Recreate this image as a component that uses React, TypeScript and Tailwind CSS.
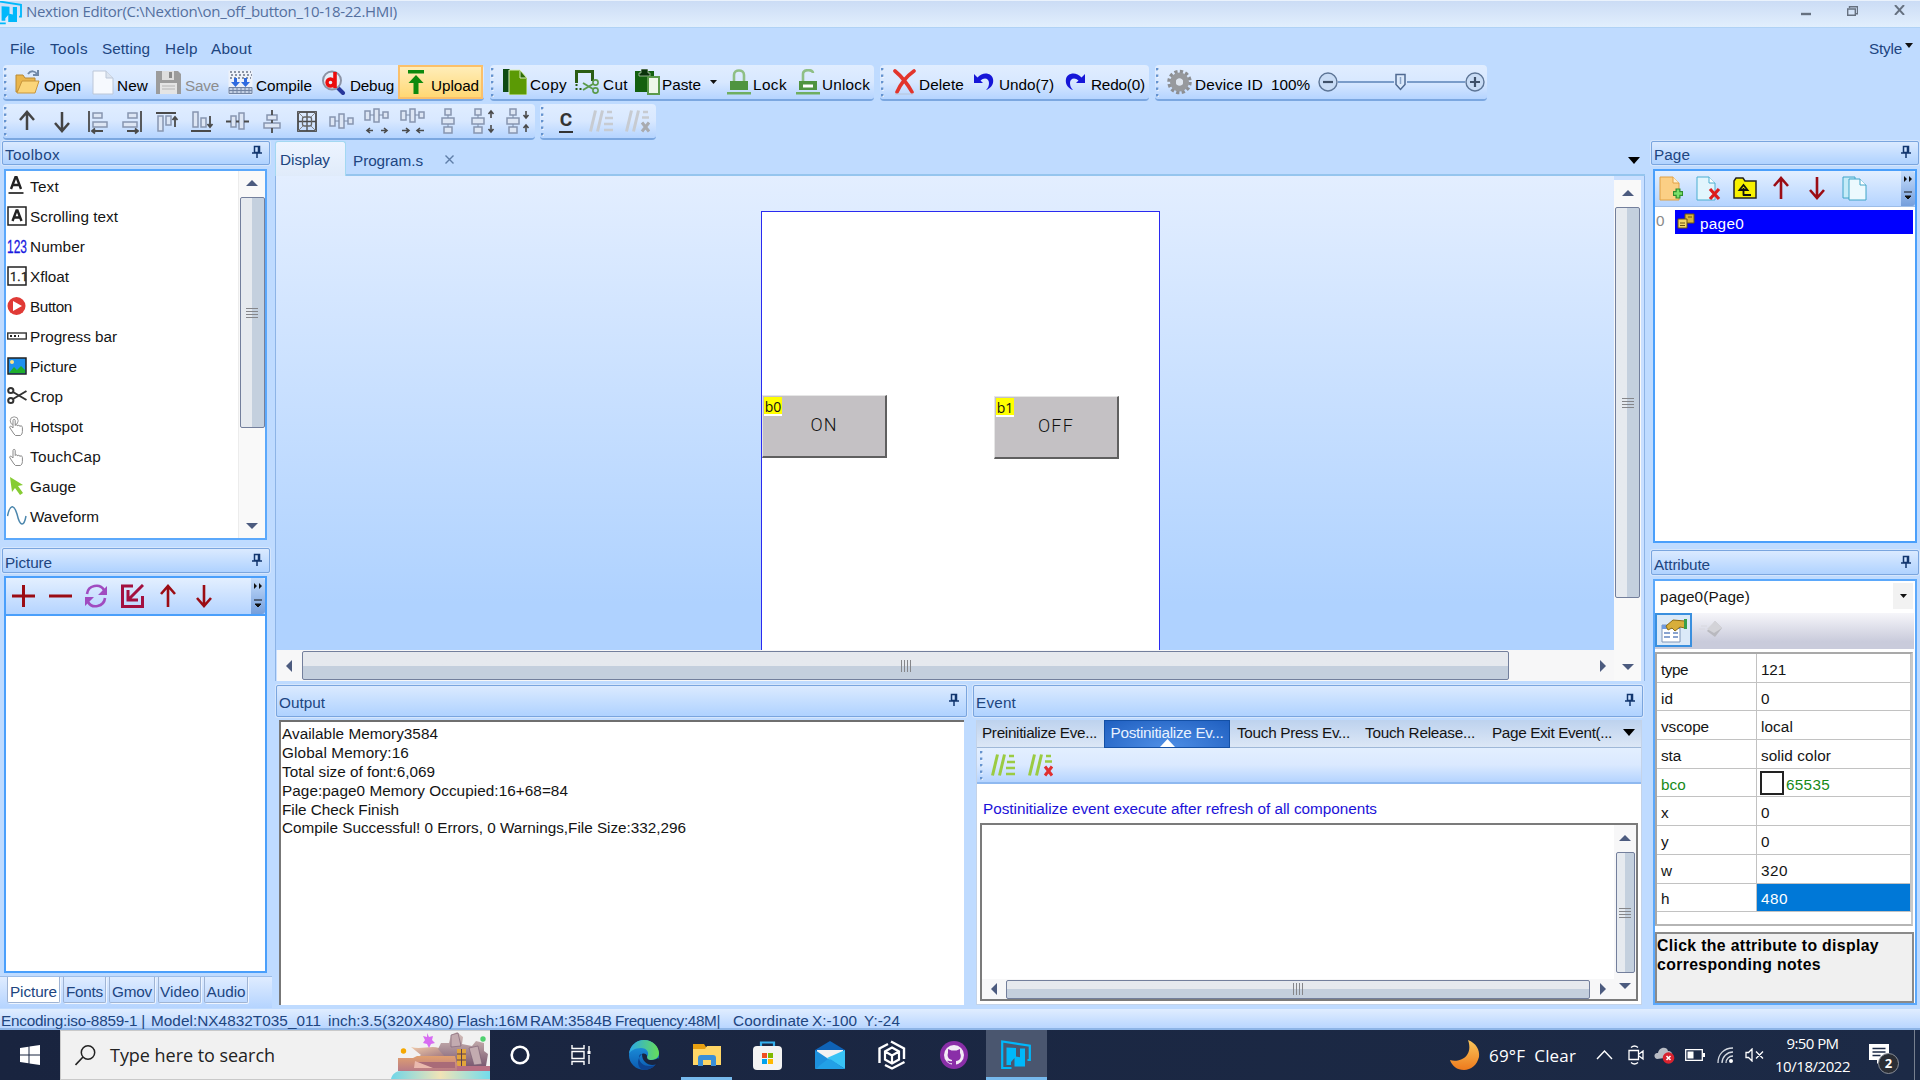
import React, { useLayoutEffect, useRef, useState } from 'react';

type Kids = { children?: React.ReactNode };

/* Text label whose letter spacing is tuned so that it spans a given width. */
function T({ w, c = '', children }: { w?: number; c?: string; children: string }) {
  const ref = useRef<HTMLSpanElement>(null);
  const [ls, setLs] = useState(0);
  useLayoutEffect(() => {
    if (!ref.current || !w) return;
    const natural = ref.current.getBoundingClientRect().width;
    setLs((w - natural) / children.length);
  }, [w, children]);
  return (
    <span ref={ref} className={'inline-block whitespace-pre ' + c} style={{ letterSpacing: ls }}>
      {children}
    </span>
  );
}

function Svg({ w = 24, h = 24, vb, c = '', children }: { w?: number; h?: number; vb?: string; c?: string } & Kids) {
  return (
    <svg width={w} height={h} viewBox={vb || `0 0 ${w} ${h}`} className={'shrink-0 ' + c} fill="none">
      {children}
    </svg>
  );
}

function Grip({ c = '' }: { c?: string }) {
  return (
    <Svg w={4} h={29} c={c}>
      {[0, 6.5, 13, 19.5, 26].map((y) => (
        <g key={y}>
          <rect x="1" y={y + 1} width="2" height="2" fill="#fff" />
          <rect x="0" y={y} width="2.4" height="2.4" fill="#6593cf" />
        </g>
      ))}
    </Svg>
  );
}

function Strip({ c = '', children }: { c?: string } & Kids) {
  return (
    <div className={'flex h-[36px] shrink-0 items-center rounded-[4px] border-b-2 border-[#7ba7e0] bg-linear-to-b from-[#e0edff] via-[#d8e8ff] to-[#b5d4ff] ' + c}>
      {children}
    </div>
  );
}

function Item({ cell, off, icon, label, w, dim, low }: { cell: string; off: string; icon: React.ReactNode; label: string; w: number; dim?: boolean; low?: boolean }) {
  return (
    <div className={'flex h-full shrink-0 items-center ' + cell}>
      <div className={'flex shrink-0 items-center ' + off}>{icon}</div>
      <T w={w} c={'relative ' + (low ? 'top-[4px] ' : 'top-[3px] ') + (dim ? 'text-[#8d8d8d]' : 'text-black')}>{label}</T>
    </div>
  );
}

const Pin = () => (
  <Svg w={10} h={14} c="relative -top-[1px]">
    <path d="M2.500 1.500h5v6h-5zM6.500 1.500v6M0 8h10M5 8v5" stroke="#12366f" strokeWidth="1.500" />
  </Svg>
);

function Head({ title, w, c }: { title: string; w: number; c: string }) {
  return (
    <div className={'flex shrink-0 items-center justify-between rounded-[2px] border border-[#7aa5de] bg-linear-to-b from-[#dbeaff] to-[#afd2ff] pl-[2px] pr-[7px] shadow-[0_0_0_1px_#d6e6fc] ' + c}>
      <T w={w} c="relative top-[2px] text-[#20457f]">{title}</T>
      <Pin />
    </div>
  );
}

const Tri = ({ d, c = '#4c5b7f' }: { d: 'u' | 'd' | 'l' | 'r'; c?: string }) => (
  <Svg w={12} h={12}>
    <path fill={c} d={d === 'u' ? 'M0 9L6 3l6 6z' : d === 'd' ? 'M0 3h12L6 9z' : d === 'l' ? 'M9 0v12L3 6z' : 'M3 0v12l6-6z'} />
  </Svg>
);

function VThumb({ c }: { c: string }) {
  return (
    <div className={'flex shrink-0 flex-col items-center justify-center gap-[2px] rounded-[2px] border border-[#737f9c] bg-linear-to-r from-[#e6eaef] from-50% to-[#c4d0de] to-50% ' + c}>
      {[0, 1, 2, 3].map((i) => <div key={i} className="h-px w-[12px] bg-[#85868a]" />)}
    </div>
  );
}
function HThumb({ c }: { c: string }) {
  return (
    <div className={'flex shrink-0 items-center justify-center gap-[2px] rounded-[2px] border border-[#737f9c] bg-linear-to-b from-[#e6e9ee] from-50% to-[#c4cfdd] to-50% ' + c}>
      {[0, 1, 2, 3].map((i) => <div key={i} className="h-[12px] w-px bg-[#85868a]" />)}
    </div>
  );
}

/* ---------- brand glyph ---------- */
const Nextion = ({ s = 30 }: { s?: number }) => (
  <Svg w={s} h={s} vb="0 0 30 30">
    <path d="M10.500 28H1.200V1.500L28.800 5.700V20H26.500" stroke="#00b8fb" strokeWidth="2.200" />
    <path d="M5.500 7.500l9.500.5v8.500l4 .8V8.500h5V26.500H13.500V18l-3.500 4v3H5.500z" fill="#00b8fb" />
  </Svg>
);

/* ---------- main toolbar icons ---------- */
const OpenI = (
  <Svg w={26} h={26}>
    <path d="M1 6h7l2 3h10v5H7L2 23H1z" fill="#e9b54c" stroke="#b98a35" />
    <path d="M7 12h17l-4 12H2z" fill="#fbd57a" stroke="#c8953c" />
    <path d="M13 5c3-4 7-3 9 0M23 1v5h-5" stroke="#7189a8" strokeWidth="2" />
  </Svg>
);
const NewI = (
  <Svg w={22} h={25}>
    <path d="M1 1h13l7 7v16H1z" fill="#f6f9fe" stroke="#bcc7d8" />
    <path d="M14 1v7h7" fill="#dce4ef" stroke="#bcc7d8" />
  </Svg>
);
const SaveI = (
  <Svg w={25} h={25}>
    <path d="M0 1h22l3 3v20H0z" fill="#9c9c9c" />
    <path d="M6 1h12v9H6z" fill="#dedede" /><path d="M13 2h3v6h-3z" fill="#8b8b8b" />
    <path d="M4 13h17v11H4z" fill="#e4e4e4" /><path d="M6 16h13M6 19h13" stroke="#b4b4b4" />
  </Svg>
);
const CompileI = (
  <Svg w={25} h={25}>
    <rect x="0.500" y="0.500" width="24" height="24" fill="#eef2f9" />
    <path d="M2 2h21M3 5h21M2 8h21" stroke="#6b7689" strokeWidth="1.500" strokeDasharray="2 2" />
    <path d="M6 8h3v4h3l-4.500 5L3 12h3zM16 8h3v4h3l-4.500 5L13 12h3z" fill="#2f6be0" />
    <path d="M1 17.500h23v6H1z" fill="#c3cfe2" stroke="#7384a2" /><path d="M1 20.500h23M5 17v7M9 17v7M13 17v7M17 17v7M21 17v7" stroke="#7384a2" />
  </Svg>
);
const DebugI = (
  <Svg w={25} h={25}>
    <path d="M16 17l6 6" stroke="#27379b" strokeWidth="4" strokeLinecap="round" />
    <circle cx="11" cy="10.500" r="9" fill="#e6edf7" stroke="#8c93a5" strokeWidth="2" />
    <circle cx="9.500" cy="12.500" r="3.500" stroke="#ec0c0c" strokeWidth="3.400" /><path d="M14 2v16" stroke="#ec0c0c" strokeWidth="3.600" />
  </Svg>
);
const UploadI = (
  <Svg w={16} h={24}>
    <path d="M0 0h16v3.500H0zM8 5l7.500 8H10.500v11h-5V13H.5z" fill="#0d8a0d" />
  </Svg>
);
const CopyI = (
  <Svg w={24} h={26}>
    <path d="M0 0h7v23H0z" fill="#0d4a12" /><path d="M6 1h11l7 8v17H6z" fill="#5b9a05" stroke="#d9edc0" /><path d="M17 2v7h6" stroke="#d9edc0" fill="#2d6b0a" />
  </Svg>
);
const CutI = (
  <Svg w={25} h={26}>
    <path d="M1.500 14V2.500h16V12" stroke="#2b5d14" strokeWidth="3" /><path d="M1.500 15v5h7" stroke="#2b5d14" strokeWidth="2" strokeDasharray="2 2" />
    <circle cx="20.500" cy="13.500" r="2.600" stroke="#5b9a4b" strokeWidth="1.600" /><circle cx="20.500" cy="21.500" r="2.600" stroke="#5b9a4b" strokeWidth="1.600" />
    <path d="M18 15l-10 6M18 20L8 14" stroke="#5b9a4b" strokeWidth="2" />
  </Svg>
);
const PasteI = (
  <Svg w={25} h={26}>
    <path d="M0 2h19v21H0z" fill="#14600f" /><path d="M6 0h7v4h2v3H4V4h2z" fill="#0a330b" stroke="#e6f2e0" strokeWidth=".6" />
    <path d="M13 8h11v17H13z" fill="#eef7ea" stroke="#5b9a4b" strokeWidth="2" />
  </Svg>
);
const Lock = ({ open }: { open?: boolean }) => (
  <Svg w={24} h={26}>
    <path d={open ? 'M7 12V5c0-5 10-5 10-1' : 'M7 12V6c0-6 10-6 10 0v6'} stroke="#8fbf85" strokeWidth="2.600" />
    <path d="M3 12h18v9H3z" fill="#4f9440" />{open && <path d="M7 15.500h10v3H7z" fill="#fff" />}
    <path d="M0 23h24v2.500H0z" fill="#6fae60" />
  </Svg>
);
const DelI = (
  <Svg w={23} h={26}>
    <path d="M2 2c6 5 12 12 17 21M21 2C14 7 8 14 4 23" stroke="#e2352c" strokeWidth="3.600" strokeLinecap="round" />
    <path d="M2 25h18" stroke="#b7c4d8" />
  </Svg>
);
const Undo = ({ flip }: { flip?: boolean }) => (
  <Svg w={20} h={20} c={flip ? '-scale-x-100' : ''}>
    <path d="M0 2v9h9L6.500 8.500C10 5 15 6 15 11c0 3-1 5-3 7 5-2 8-6 7-11C18 1 9-1 3.500 5.500z" fill="#1616d8" />
  </Svg>
);
const GearI = (
  <Svg w={25} h={26} vb="0 0 25 26">
    <circle cx="12.500" cy="13" r="10.500" stroke="#8d8f93" strokeWidth="3.500" strokeDasharray="3.200 2.300" />
    <circle cx="12.500" cy="13" r="6.500" stroke="#97999d" strokeWidth="6" /><circle cx="12.500" cy="13" r="3.500" fill="#dfe5ee" />
  </Svg>
);
const Round = ({ plus }: { plus?: boolean }) => (
  <Svg w={20} h={20}>
    <circle cx="10" cy="10" r="9" fill="#c9dcf5" stroke="#5d7596" strokeWidth="1.400" /><path d={plus ? 'M5 10h10M10 5v10' : 'M5 10h10'} stroke="#3f5068" strokeWidth="2.200" />
  </Svg>
);

/* ---------- alignment toolbar icons ---------- */
const B = (x: number, y: number, w: number, h: number) => <rect x={x} y={y} width={w} height={h} fill="#dde6f4" stroke="#8795b0" strokeWidth="1.500" />;
const K = { stroke: '#4a4a4a', strokeWidth: 1.8 };
const hTrio = <>{B(1, 9, 5, 9)}{B(10, 6, 5, 14)}{B(19, 10, 5, 6)}<path d="M6 13h4M15 13h4" stroke="#7d8ca8" /></>;
const hTrioUp = <>{B(1, 3, 5, 9)}{B(10, 1, 5, 13)}{B(19, 4, 5, 6)}<path d="M6 7h4M15 7h4" stroke="#7d8ca8" /></>;
const vTrio = <>{B(5, 1, 6, 6)}{B(2, 10, 12, 6)}{B(4, 19, 8, 6)}<path d="M8 7v3M8 16v3" stroke="#7d8ca8" /></>;
const alignIcons: React.ReactNode[] = [
  <path d="M13 22V4.500M6 12l7-8 7 8" stroke="#444" strokeWidth="2.500" />,
  <path d="M13 4v18M6 15l7 8 7-8" stroke="#444" strokeWidth="2.500" />,
  <>{B(9, 5, 9, 5)}{B(9, 14, 14, 5)}<path d="M5 3v21M8 23h11M11 20.500l-3 2.500 3 2.500" {...K} /></>,
  <>{B(9, 5, 9, 5)}{B(4, 14, 14, 5)}<path d="M22 3v21M8 23h11M16 20.500l3 2.500-3 2.500" {...K} /></>,
  <>{B(4, 8, 5, 15)}{B(12, 8, 5, 9)}<path d="M2 5h20M21 19V9M18.500 12L21 9l2.500 3" {...K} /></>,
  <>{B(4, 4, 5, 15)}{B(12, 10, 5, 9)}<path d="M2 23h20M21 8v11M18.500 16l2.500 3 2.500-3" {...K} /></>,
  <>{B(7, 8, 5, 11)}{B(15, 5, 5, 16)}<path d="M2 13.500h5M12 13.500h3M20 13.500h5" {...K} /></>,
  <>{B(8, 7, 10, 5)}{B(5, 15, 16, 5)}<path d="M13 2v5M13 12v3M13 20v5" {...K} /></>,
  <><rect x="4" y="4" width="18" height="19" {...K} /><path d="M4 13.500h18M13 4v19" {...K} strokeWidth="1.300" /><rect x="8.500" y="9" width="9" height="9" rx="2" stroke="#666" strokeWidth="1.300" /><path d="M4 4l5 5M22 4l-5 5M4 23l5-5M22 23l-5-5" stroke="#888" /></>,
  hTrio,
  <>{hTrioUp}<path d="M3 22.500h6M6 20l-3 2.500L6 25M17 22.500h6M20 20l3 2.500-3 2.500" {...K} strokeWidth="1.600" /></>,
  <>{hTrioUp}<path d="M2 22.500h6M6 20l3 2.500L6 25M18 22.500h6M20 20l-3 2.500 3 2.500" {...K} strokeWidth="1.600" /></>,
  <g transform="translate(5 0)">{vTrio}</g>,
  <>{vTrio}<path d="M21 3v7M18.500 6L21 3l2.500 3M21 17v7M18.500 21l2.500 3 2.500-3" {...K} strokeWidth="1.600" /></>,
  <>{vTrio}<path d="M21 3v7M18.500 7l2.500 3 2.500-3M21 17v7M18.500 20l2.500-3 2.500 3" {...K} strokeWidth="1.600" /></>,
];
const Comment = ({ col, x }: { col: string; x?: string }) => (
  <Svg w={25} h={24}>
    <path d="M1.500 22.500L6.500 1.500M8.500 22.500l5-21" stroke={col} strokeWidth="3" />
    {x ? <><path d="M18 3h5M17 8.500h7" stroke={col} strokeWidth="2.400" /><path d="M17 13.500l7 9M24 13.500l-7 9" stroke={x} strokeWidth="3" /></>
      : <path d="M18 3h5M16 9h8M15 15h9M15 21h9" stroke={col} strokeWidth="2.400" />}
  </Svg>
);

/* ---------- toolbox ---------- */
const hand = <path d="M7 18l-4-6c-1-1.500.5-2.500 2-1l1 1V4.500c0-1.500 2.200-1.500 2.200 0v5c0-1 2.400-1 2.400.5 0-1 2.400-1 2.400.5 0-1 2.400-1 2.400 1v4c0 2-1 3.500-2 4H8.500z" fill="#fff" stroke="#8a8a8a" />;
const toolbox: [string, number, React.ReactNode][] = [
  ['Text', 29, <><path d="M4 13L8.500 1h1L14 13M5.500 9h7" stroke="#222" strokeWidth="2.400" /><path d="M1.500 17h15" stroke="#444" strokeWidth="2" /></>],
  ['Scrolling text', 88, <><rect x="1" y="1" width="18" height="18" fill="#fff" stroke="#222" strokeWidth="1.500" /><path d="M5.500 15L9.500 4.500h1l4 10.500M7 11.500h6" stroke="#222" strokeWidth="2.400" /></>],
  ['Number', 55, <text x="0" y="17" fontSize="19" fill="#1a1adf" transform="scale(.63 1)" fontFamily="Liberation Sans" stroke="#1a1adf" strokeWidth=".3">123</text>],
  ['Xfloat', 39, <><rect x="1" y="1" width="18" height="18" fill="#fff" stroke="#222" strokeWidth="1.500" /><text x="3" y="14.500" fontSize="12.500" fill="#222" letterSpacing=".3" fontFamily="Roboto" stroke="#222" strokeWidth=".3">1.1</text></>],
  ['Button', 42, <><circle cx="9.500" cy="10" r="9" fill="#e03a36" /><path d="M6 5l9 5-9 5z" fill="#fff" /></>],
  ['Progress bar', 87, <><rect x=".75" y="7" width="18.500" height="6" fill="#fff" stroke="#333" strokeWidth="1.400" /><path d="M3 10h9" stroke="#222" strokeWidth="2" strokeDasharray="2 2" /></>],
  ['Picture', 47, <><rect x="1" y="2" width="18" height="16" fill="#1e90f0" stroke="#222" strokeWidth="1.500" /><circle cx="5" cy="6" r="2" fill="#ffe38a" /><path d="M2 17l5-6 3 3 4-4 4 4v3z" fill="#1fae2c" /></>],
  ['Crop', 33, <><circle cx="3.800" cy="4.500" r="2.600" stroke="#333" strokeWidth="2" /><circle cx="3.800" cy="14.500" r="2.600" stroke="#333" strokeWidth="2" /><path d="M6 6l13.500 8M6 13l13.500-8" stroke="#333" strokeWidth="2" /></>],
  ['Hotspot', 53, <><circle cx="7.200" cy="4.800" r="4" stroke="#999" />{hand}</>],
  ['TouchCap', 71, hand],
  ['Gauge', 46, <path d="M3 1l13 8-5 1 5 7-3 2-5-7-3 4z" fill="#86cc33" />],
  ['Waveform', 69, <path d="M.5 10C3-2 7-2 10 8c3 13 7 13 9 2" stroke="#4c87ad" strokeWidth="1.500" />],
];

const Overflow = ({ c = '' }: { c?: string }) => (
  <div className={'flex w-[14px] shrink-0 flex-col items-center justify-between rounded-r-[3px] bg-linear-to-b from-[#c6ddfb] to-[#759fdc] py-[5px] ' + c}>
    <Svg w={10} h={6}><path d="M1 0l3 3-3 3zM6 0l3 3-3 3z" fill="#111" /></Svg>
    <Svg w={8} h={10}><path d="M0 1h8M1 5h6l-3 3z" fill="#111" stroke="#111" strokeWidth="1" /></Svg>
  </div>
);
const RedArrow = ({ down, w = 18 }: { down?: boolean; w?: number }) => (
  <Svg w={w} h={24} vb="0 0 18 24"><path d={down ? 'M9 1v20M2 14l7 8 7-8' : 'M9 23V3M2 10l7-8 7 8'} stroke="#9b0c14" strokeWidth="2.600" /></Svg>
);

function LeftColumn() {
  return (
    <div className="flex w-[272px] shrink-0 flex-col">
      <Head title="Toolbox" w={55} c="mt-px ml-[2px] h-[24px] w-[268px]" />
      <div className="mt-[4px] ml-[4px] flex h-[371px] w-[263px] shrink-0 border-2 border-[#5ba8fb] bg-white">
        <div className="w-[232px]">
          {toolbox.map(([name, w, icon]) => (
            <div key={name} className="flex h-[30px] items-center pl-[2px]">
              <Svg w={20} h={20} c="relative mr-[3px] -ml-px">{icon}</Svg>
              <T w={w} c="relative top-[1px] text-[#141414]">{name}</T>
            </div>
          ))}
        </div>
        <div className="flex flex-1 flex-col items-center justify-between border-l border-[#ececec] bg-[#f9f9f9] pt-[6px] pb-[6px]">
          <Tri d="u" />
          <VThumb c="mt-[8px] mb-auto h-[231px] w-[25px]" />
          <Tri d="d" />
        </div>
      </div>
      <Head title="Picture" w={47} c="mt-[8px] ml-[2px] h-[25px] w-[268px]" />
      <div className="mt-[3px] ml-[4px] flex h-[397px] w-[263px] shrink-0 flex-col border-2 border-[#4a9ffb] bg-white">
        <div className="flex h-[38px] border-b-2 border-[#4a9ffb] bg-linear-to-b from-[#e3efff] to-[#b5d4ff]">
          <div className="flex flex-1 items-center gap-[13.500px] pl-[6px]">
            <Svg w={23}><path d="M0 12h23M11.500 1v22" stroke="#9b0c14" strokeWidth="3" /></Svg>
            <Svg w={23}><path d="M0 12h23" stroke="#9b0c14" strokeWidth="3" /></Svg>
            <Svg w={22}>
              <path d="M2 10C3 1 15-1 19 6M20 14C19 23 7 25 3 18" stroke="#a04bc0" strokeWidth="2.600" />
              <path d="M22 2v9h-9zM0 22v-9h9z" fill="#a04bc0" />
            </Svg>
            <Svg w={23}><path d="M12 2H1.500v20.500H21.500V12M22 1L8 15M7 6v10h10" stroke="#a3103f" strokeWidth="3" /></Svg>
            <RedArrow w={22} />
            <RedArrow w={22} down />
          </div>
          <Overflow />
        </div>
      </div>
      <div className="mt-[3px] flex h-[32px] border-t border-[#9dbde8] bg-linear-to-b from-[#dfecff] to-[#b5d4ff] pl-[7px] text-[#20457f]">
        {([['Picture', 'w-[53px] mr-[3px] bg-white', 47], ['Fonts', 'w-[43px] mr-[3px]', 37], ['Gmov', 'w-[46px] mr-[3px]', 40], ['Video', 'w-[43px] mr-[3px]', 39], ['Audio', 'w-[44px]', 39]] as [string, string, number][]).map(([n, c, w]) => (
          <div key={n} className={'flex h-[26px] items-center justify-center rounded-b-[2px] border border-t-0 border-[#9fb4d4] shadow-[1px_1px_0_#eef5ff] ' + c}>
            <T w={w} c="relative top-[2px]">{n}</T>
          </div>
        ))}
      </div>
    </div>
  );
}

function CanvasButton({ id, label, w, c }: { id: string; label: string; w: number; c: string }) {
  return (
    <div className={'absolute flex h-[63px] w-[125px] items-center justify-center border-t border-r-2 border-b-2 border-l border-t-[#e6e6e6] border-r-[#5f5f5f] border-b-[#5f5f5f] border-l-[#e6e6e6] bg-[#c4c1c4] ' + c}>
      <div className="absolute top-px left-px flex h-[19px] w-[18px] items-center justify-center border-b-2 border-white bg-[#ffff00] pt-[2px] font-['Open_Sans'] text-[14px] leading-none text-[#111]">{id}</div>
      <T w={w} c="relative -top-px font-[Roboto] text-[18px] font-light text-[#111]">{label}</T>
    </div>
  );
}

function Workspace() {
  return (
    <div className="flex h-[540px] flex-col">
      <div className="flex h-[35px] shrink-0">
        <div className="flex w-[71px] items-center rounded-t-[3px] border border-b-0 border-[#a3d8f2] bg-linear-to-b from-[#edf4ff] to-[#e0ebfa] pt-[4px] pl-[4px] text-[#20457f]">
          <T w={50} c="relative -top-[1px]">Display</T>
        </div>
        <div className="flex flex-1 items-center border-b-2 border-[#95c5ee] pt-[7px] pl-[7px] text-[#20457f]">
          <T w={70}>Program.s</T>
          <Svg w={9} h={9} c="relative -top-[2px] ml-[22px]"><path d="M.5.5l8 8M8.500.5l-8 8" stroke="#5f7ea8" strokeWidth="1.400" /></Svg>
          <Svg w={12} h={9} c="relative -top-[1px] mr-[5px] ml-auto"><path d="M0 1h12L6 8z" fill="#000" /></Svg>
        </div>
      </div>
      <div className="flex h-[505px] border-x border-[#8db4e6] bg-[#c9dfff]">
        <div className="flex w-[1338px] shrink-0 flex-col">
          <div className="relative h-[474px] overflow-hidden bg-linear-to-b from-[#e3eeff] to-[#afd2ff] to-90%">
            <div className="absolute top-[35px] left-[485px] h-[450px] w-[399px] border border-[#2a2af0] bg-white">
              <CanvasButton id="b0" label="ON" w={27} c="top-[183px] left-0" />
              <CanvasButton id="b1" label="OFF" w={36} c="top-[184px] left-[232px]" />
            </div>
          </div>
          <div className="ml-px flex flex-1 items-center bg-[#f7f7f8]">
            <div className="ml-[6px] flex w-[19px]"><Tri d="l" /></div>
            <HThumb c="h-[29px] w-[1207px]" />
            <div className="mr-[5px] ml-auto flex"><Tri d="r" /></div>
          </div>
        </div>
        <div className="mt-[4px] flex w-[27px] flex-col items-center bg-[#f9f9f9]">
          <div className="mt-[7px] mb-[8px]"><Tri d="u" /></div>
          <VThumb c="h-[391px] w-[25px]" />
          <div className="mt-auto mb-[8px]"><Tri d="d" /></div>
        </div>
      </div>
    </div>
  );
}

function OutputPanel() {
  const lines: [string, number][] = [
    ['Available Memory3584', 156], ['Global Memory:16', 127], ['Total size of font:6,069', 153],
    ['Page:page0 Memory Occupied:16+68=84', 286], ['File Check Finish', 117],
    ['Compile Successful! 0 Errors, 0 Warnings,File Size:332,296', 404],
  ];
  return (
    <div className="flex w-[691px] flex-col">
      <Head title="Output" w={46} c="h-[32px]" />
      <div className="mt-[3px] ml-[3px] h-[285px] w-[685px] border-t-2 border-l-2 border-t-[#6f6f6f] border-l-[#777] bg-white pt-[3px] pl-px text-[#141414]">
        {lines.map(([t, w]) => <div key={t} className="flex h-[18.800px] items-center"><T w={w}>{t}</T></div>)}
      </div>
    </div>
  );
}

function EventPanel() {
  return (
    <div className="ml-[6px] flex w-[670px] flex-col">
      <Head title="Event" w={40} c="h-[32px]" />
      <div className="mt-[3px] ml-[3px] flex h-[285px] w-[666px] flex-col border-r border-b border-l border-[#c4d3e8] bg-white">
        <div className="flex h-[28px] shrink-0 items-center border-b border-[#9fb8d8] bg-linear-to-b from-[#bdd2ee] to-[#dce7f6] text-[#141414]">
          <div className="w-[127px] pl-[5px]"><T w={115} c="relative -top-px">Preinitialize Eve...</T></div>
          <div className="relative flex h-[28px] w-[126px] justify-center border border-[#1450a5] bg-[radial-gradient(ellipse_at_bottom,#4f8fe6,#1f5fc0)] pt-[3px] text-[#e8f1ff]">
            <T w={113}>Postinitialize Ev...</T>
            <Svg w={15} h={8} c="absolute bottom-0 left-[55px]"><path d="M0 8l7.500-8L15 8z" fill="#fff" /></Svg>
          </div>
          <div className="w-[135px] pl-[7px]"><T w={113} c="relative -top-px">Touch Press Ev...</T></div>
          <div className="w-[127px]"><T w={110} c="relative -top-px">Touch Release...</T></div>
          <T w={120} c="relative -top-px">Page Exit Event(...</T>
          <Svg w={12} h={9} c="relative -top-px mr-[6px] ml-auto"><path d="M0 1h12L6 8z" fill="#000" /></Svg>
        </div>
        <div className="flex h-[36px] shrink-0 items-center border-b-2 border-[#8fb9f0] bg-linear-to-b from-[#e3efff] via-[#dae9ff] to-[#b5d4ff] pl-[3px]">
          <Grip c="mr-[7px]" />
          <Comment col="#9bcb42" />
          <div className="w-[12px]" />
          <Comment col="#9bcb42" x="#e03030" />
        </div>
        <div className="flex h-[39px] shrink-0 items-center pt-[11px] pl-[6px] text-[#1c12d8]">
          <T w={394}>Postinitialize event execute after refresh of all components</T>
        </div>
        <div className="ml-[3px] flex h-[178px] w-[658px] border-2 border-[#7b7b7b] bg-white">
          <div className="flex flex-1 flex-col">
            <div className="flex-1" />
            <div className="flex h-[20px] items-center bg-[#f7f7f8]">
              <div className="ml-[6px] flex w-[18px]"><Tri d="l" /></div>
              <HThumb c="h-[19px] w-[584px]" />
              <div className="mr-[5px] ml-auto flex"><Tri d="r" /></div>
            </div>
          </div>
          <div className="flex w-[22px] flex-col items-center bg-[#f7f7f8]">
            <div className="mt-[7px] mb-[8px]"><Tri d="u" /></div>
            <VThumb c="h-[121px] w-[19px]" />
            <div className="mt-auto mb-[7px]"><Tri d="d" /></div>
          </div>
        </div>
      </div>
    </div>
  );
}

const attrs: [string, number, string, number][] = [
  ['type', 27, '121', 25], ['id', 12, '0', 9], ['vscope', 48, 'local', 32], ['sta', 20, 'solid color', 70], ['bco', 25, '65535', 44],
  ['x', 8, '0', 9], ['y', 8, '0', 9], ['w', 11, '320', 27], ['h', 9, '480', 27],
];

function RightColumn() {
  return (
    <div className="ml-auto flex w-[271px] shrink-0 flex-col">
      <Head title="Page" w={36} c="mt-px ml-[2px] h-[24px] w-[268px]" />
      <div className="mt-[4px] ml-[4px] flex h-[374px] w-[264px] shrink-0 flex-col border-2 border-[#4a9ffb] bg-white">
        <div className="flex h-[36px] shrink-0 border-b border-[#9dbde8] bg-linear-to-b from-[#e3efff] to-[#b5d4ff]">
          <div className="flex flex-1 items-center pb-px pl-[5px]">
            <Svg w={25} h={25} c="mr-[12px] -ml-px">
              <path d="M1 1h13l6 6v17H1z" fill="#fbcf85" stroke="#e0a044" /><path d="M14 1v6h6" fill="#fff0d0" stroke="#e0a044" />
              <path d="M14 17.500h10M19 12.500v10" stroke="#2f8e2f" strokeWidth="5" /><path d="M15 17.500h8M19 13.500v8" stroke="#7be06a" strokeWidth="2.500" />
            </Svg>
            <Svg w={25} h={25} c="mr-[12px]">
              <path d="M1 1h12l6 6v17H1z" fill="#e2f5fd" stroke="#4aaed0" /><path d="M13 1v6h6" fill="#fff" stroke="#4aaed0" />
              <path d="M14 13l9 10M23 13l-9 10" stroke="#dc1c1c" strokeWidth="3.200" />
            </Svg>
            <Svg w={25} h={25} c="mr-[14px]">
              <path d="M1 22V5l2-3h7l2 3h11v17z" fill="#f7f000" stroke="#222" strokeWidth="1.500" />
              <path d="M10 19h8M10.500 19.500V12M6.500 14l4-5 4 5z" stroke="#111" strokeWidth="1.800" />
            </Svg>
            <RedArrow /><div className="w-[18px]" /><RedArrow down />
            <Svg w={25} h={25} c="ml-[16px]">
              <path d="M1 1h12v21H1z" fill="#c4ebf8" stroke="#3fa4c8" /><path d="M7 3h11l6 6v15H7z" fill="#ecf9fe" stroke="#3fa4c8" /><path d="M18 3v6h6" fill="#fff" stroke="#3fa4c8" />
            </Svg>
          </div>
          <Overflow />
        </div>
        <div className="mt-[3px] flex h-[24px]">
          <div className="w-[20px] pt-[2px] pl-px text-[#8a8a8a]"><T w={9}>0</T></div>
          <div className="mr-[2px] flex flex-1 items-center bg-[#0000ff] pl-[2px] text-white">
            <Svg w={18} h={16} c="relative -top-[1px] mr-[5px]">
              <path d="M8 1h9v9H8z" fill="#d9b53a" stroke="#6b5310" /><path d="M1 6h9v9H1z" fill="#f0d566" stroke="#6b5310" /><path d="M3 10h5M3 12.500h5M11 4h4" stroke="#6b5310" />
            </Svg>
            <T w={44} c="relative top-[2px]">page0</T>
          </div>
        </div>
      </div>
      <Head title="Attribute" w={56} c="mt-[7px] ml-[2px] h-[25px] w-[268px]" />
      <div className="mt-[4px] ml-[4px] flex h-[426px] w-[264px] shrink-0 flex-col border-2 border-[#5ba8fb] bg-white">
        <div className="flex h-[30px] shrink-0 items-center justify-between pl-[5px] text-[#141414]">
          <T w={90} c="relative top-[1px]">page0(Page)</T>
          <div className="mr-[2px] flex h-[26px] w-[20px] items-center justify-center bg-[#f2f2f2]"><Svg w={7} h={4}><path d="M0 0h7L3.500 4z" fill="#111" /></Svg></div>
        </div>
        <div className="mt-[2px] mr-px flex h-[36px] shrink-0 items-start bg-linear-to-b from-[#f6f6fa] to-[#c9cbdb] to-80%">
          <div className="flex h-[34px] w-[37px] items-center justify-center border-2 border-[#3a8fde] bg-[#dbe9f8]">
            <Svg w={27} h={25}>
              <path d="M2 7h18v17H2z" fill="#fff" stroke="#7f95b8" /><path d="M2 7h18v4H2z" fill="#6f9be0" /><path d="M4 15h6M4 19h6M13 15h5M13 19h5" stroke="#8aa4d0" strokeWidth="2" />
              <path d="M6 8l7-6 12 1v7l-5-1-5 4-3-3-4 2z" fill="#d8ae3a" stroke="#8a6b16" /><path d="M24 1h3v10h-3z" fill="#3a9e4a" />
            </Svg>
          </div>
          <Svg w={24} h={22} c="mt-[6px] ml-[7px]"><path d="M16 2l7 7-7 9-8-6z" fill="#b9b9bf" /><path d="M16 2l-8 8 7 4 8-5z" fill="#d3d3d8" /><path d="M2 7h6M0 10h6" stroke="#d8d8de" /></Svg>
        </div>
        <div className="mr-[2px] mt-[3px] h-[274px] shrink-0 border-2 border-[#a9a9a9] border-r-[#c9c9c9] border-b-[#b5b5b5]">
          {attrs.map(([k, kw, v, vw], i) => (
            <div key={k} className={'flex h-[28.700px] items-stretch border-r border-b border-[#c2c2c2] ' + (i === 4 ? 'text-[#178a17]' : 'text-[#141414]')}>
              <div className="flex w-[100px] items-center border-r border-[#c2c2c2] pl-[4px]"><T w={kw} c="relative top-[2px]">{k}</T></div>
              <div className={'flex flex-1 items-center ' + (i === 8 ? 'bg-[#0078d7] pl-[4px] text-white' : i === 4 ? 'pl-[3px]' : 'pl-[4px]')}>
                {i === 4 && <div className="mr-[2px] h-[24px] w-[24px] border-2 border-[#222] bg-white" />}
                <T w={vw} c="relative top-[2px]">{v}</T>
              </div>
            </div>
          ))}
        </div>
        <div className="mr-px mt-[6px] h-[71px] border-2 border-[#8a8a8a] bg-[#f0f0f0] pt-[2px] text-[15.800px] font-bold leading-[19px] text-black">
          <div><T w={222}>Click the attribute to display</T></div>
          <div><T w={164}>corresponding notes</T></div>
        </div>
      </div>
    </div>
  );
}

/* ---------- taskbar ---------- */
function Skyline() {
  return (
    <Svg w={99} h={48}>
      <defs>
        <linearGradient id="m1" x1="0" y1="0" x2="0" y2="1"><stop stopColor="#d9c4bd" /><stop offset="1" stopColor="#7b5a72" /></linearGradient>
        <linearGradient id="m2" x1="0" y1="0" x2="1" y2="1"><stop stopColor="#f0c9a8" /><stop offset="1" stopColor="#8c6478" /></linearGradient>
        <linearGradient id="m3"><stop stopColor="#6fd6e8" /><stop offset=".5" stopColor="#f1e3b6" /><stop offset="1" stopColor="#72dcec" /></linearGradient>
        <linearGradient id="m4" x1="0" y1="0" x2="0" y2="1"><stop stopColor="#e0a070" /><stop offset="1" stopColor="#b87a86" /></linearGradient>
      </defs>
      <path d="M20 16c10 3 20-2 28 1l14 12H22l8-5z" fill="url(#m2)" />
      <path d="M47 18l3-6h8l2-8 6-3 6 5-1 7 10 2 4-5 8 2v8l4 3-2 12H62z" fill="url(#m1)" />
      <path d="M60 4l7-2 3 13-10 1zM78 17l9-2 4 18-8 1z" fill="#c3abb0" stroke="#775a70" strokeWidth=".6" />
      <path d="M66 18h9v17h-9z" fill="#e2a53b" /><path d="M66 23h9M66 29h9M70.500 18v17" stroke="#5a3d50" />
      <path d="M7 27h15l4-2h38l4 15H7z" fill="url(#m4)" /><path d="M24 31h40v6H24z" fill="#a96b78" /><path d="M24 30l18 7H23z" fill="#eab9ad" />
      <path d="M66 35h33v6H66z" fill="#b76f83" />
      <path d="M0 48c1-5 5-8 10-8h89v8z" fill="url(#m3)" />
      <path d="M36 2l2 4 4-1-1 4 3 3-4 1-2 4-2-4-4-1 2-3-2-4 4 1z" fill="#d76cf2" />
      <circle cx="12.500" cy="20" r="2.700" fill="#f5a800" /><circle cx="92" cy="8" r="2.700" fill="#4ed06e" />
    </Svg>
  );
}

function Taskbar() {
  return (
    <div className="flex h-[50px] w-full shrink-0 items-stretch bg-linear-to-r from-[#19243f] to-[#1c2a46] font-['Open_Sans'] text-white">
      <div className="flex w-[60px] items-center justify-center">
        <Svg w={20} h={20}><path d="M0 3l8.500-1.200V9.500H0zM9.500 1.600L20 0v9.500H9.500zM0 10.500h8.500v7.700L0 17zM9.500 10.500H20V20L9.500 18.400z" fill="#fff" /></Svg>
      </div>
      <div className="flex w-[430px] items-center border border-r-0 border-[#c9c9c9] bg-[#f1f1f1] pl-[14px] text-[#222]">
        <Svg w={21} h={21}><circle cx="13" cy="7.500" r="6.700" stroke="#222" strokeWidth="1.500" /><path d="M8 12l-7.500 8" stroke="#222" strokeWidth="1.600" /></Svg>
        <T w={165} c="ml-[14px] text-[18px]">Type here to search</T>
        <div className="ml-auto flex"><Skyline /></div>
      </div>
      <div className="flex w-[59px] items-center justify-center"><Svg w={20} h={20}><circle cx="10" cy="10" r="8.300" stroke="#fff" strokeWidth="2.600" /></Svg></div>
      <div className="flex w-[63px] items-center justify-center">
        <Svg w={20} h={20}><path d="M1 0v3.500h12V0M1 20v-3.500h12V20M1 6.500h12v7H1zM18 1v5M18 10v9" stroke="#fff" strokeWidth="1.400" /><path d="M16.500 6h3v3h-3z" fill="#fff" /></Svg>
      </div>
      <div className="flex w-[64px] items-center justify-center">
        <Svg w={30} h={30}>
          <defs>
            <linearGradient id="e1"><stop stopColor="#2aa7ea" /><stop offset="1" stopColor="#66dd58" /></linearGradient>
            <linearGradient id="e2" x1="0" y1="0" x2="0" y2="1"><stop stopColor="#1f9be4" /><stop offset="1" stopColor="#0b5ab0" /></linearGradient>
          </defs>
          <circle cx="15" cy="15" r="15" fill="url(#e2)" />
          <path d="M0 14C1 5 8 0 15 0c9 0 15 7 15 13 0 4-3 7-8 7-4 0-5-1-4-3 3-4 0-9-6-9C6 8 1 11 0 14z" fill="url(#e1)" />
          <path d="M10 17c0 6 5 9 10 9 3 0 6-1 7-2-3 4-8 6-12 6C8 29 7 19 13 14c-2 0-3 1-3 3z" fill="#0d4391" />
          <path d="M13 14c2-1 5 0 5 2 0 3 1 4 4 4 3 0 5-.5 7-2l1 1-2 5c-7 3-15-1-15-10z" fill="#19243f" />
        </Svg>
      </div>
      <div className="mr-[2px] ml-[5px] flex w-[51px] items-center justify-center border-b-3 border-[#76b9ed] pt-[3px]">
        <Svg w={28} h={24}><path d="M0 1h11l2 3h15v18H0z" fill="#e8a010" /><path d="M0 6h12l2-3h14v19H0z" fill="#ffd666" /><path d="M5 23v-8c0-2 1-3 3-3h12c2 0 3 1 3 3v8h-5v-6H10v6z" fill="#3a8fd8" /></Svg>
      </div>
      <div className="flex w-[67px] items-center justify-center">
        <Svg w={29} h={29}><path d="M8 6V1.500h13V6" stroke="#35b0ee" strokeWidth="2.200" /><rect y="5" width="29" height="24" rx="4" fill="#f3f3f3" /><path d="M9 12h5v5H9z" fill="#f04e23" /><path d="M15 12h5v5h-5z" fill="#7fb900" /><path d="M9 18h5v5H9z" fill="#00a3ee" /><path d="M15 18h5v5h-5z" fill="#ffb800" /></Svg>
      </div>
      <div className="flex w-[60px] items-center justify-center pr-[2px]">
        <Svg w={30} h={28}><path d="M0 9L15 0l15 9v4H0z" fill="#0f62b5" /><path d="M2 9h26v10H2z" fill="#f2f2f2" /><path d="M0 9l15 10L0 28z" fill="#1d90dc" /><path d="M30 9v19L12 17z" fill="#38c3f5" /><path d="M0 28l13-10 3 .5L30 28z" fill="#22a0e6" /></Svg>
      </div>
      <div className="flex w-[64px] items-center justify-center pr-[2px]">
        <Svg w={28} h={30}>
          <path d="M1.500 23V8.500L10 4M13 1.500l13 7V19M26.500 22L14 28.500 7 25" stroke="#fff" strokeWidth="2.400" />
          <path d="M14 7.500l7 4v8l-7 4-7-4v-8zM7 11.500l7 4 7-4M14 15.500v8" stroke="#fff" strokeWidth="2.200" />
        </Svg>
      </div>
      <div className="flex w-[61px] items-center justify-center pr-[4px]">
        <Svg w={28} h={28}><circle cx="14" cy="14" r="14" fill="#8a2fa8" /><circle cx="14" cy="14" r="10" fill="#f2ecf5" /><path d="M8 8l3.500 1.500h5L20 8v4c2 4 0 8-4 8v4h-4v-2c-3 1-3-1-5-2 2-1 3 1 5 0v-1c-4-1-5-4-4-7z" fill="#8a2fa8" /></Svg>
      </div>
      <div className="flex w-[61px] items-center justify-center border-b-3 border-[#76b9ed] bg-[#4a566f] pt-[2px] pr-px"><Nextion s={30} /></div>
      <div className="ml-auto flex items-center">
        <Svg w={30} h={30}><defs><linearGradient id="mo" x1="0" y1="0" x2="0" y2="1"><stop stopColor="#f9c65a" /><stop offset="1" stopColor="#ee7a1d" /></linearGradient></defs><path d="M18 0c8 3 12 10 11 17-2 8-8 13-15 13C7 30 2 26 0 20c9 3 24-3 18-20z" fill="url(#mo)" /></Svg>
        <T w={87} c="relative top-px ml-[9px] text-[17px]">69°F  Clear</T>
        <Svg w={17} h={10} c="ml-[20px]"><path d="M1 9l7.500-8L16 9" stroke="#fff" strokeWidth="1.400" /></Svg>
        <Svg w={16} h={20} c="ml-[15px]"><path d="M1 5.500h9.500v9H1zM11 9l4-3v8l-4-3M3 2.500C5 .8 8 .8 10 2.500M3 17.500c2 1.700 5 1.700 7 0" stroke="#fff" strokeWidth="1.300" /></Svg>
        <Svg w={21} h={18} c="ml-[10px]"><path d="M3 13c-4-1-3-7 1-6C5 1 13 0 14 5c4 0 5 3 4 6z" fill="#b8bcc4" /><circle cx="14.500" cy="12" r="5.800" fill="#d8232f" /><path d="M12.500 10l4 4M16.500 10l-4 4" stroke="#fff" strokeWidth="1.600" /></Svg>
        <Svg w={20} h={12} c="ml-[10px]"><path d="M.7.700h16.600v10.600H.7z" stroke="#fff" strokeWidth="1.300" /><path d="M2.500 2.500h6v7h-6zM18 4h2v4h-2z" fill="#fff" /></Svg>
        <Svg w={17} h={17} c="ml-[12px]"><path d="M1 16C1 7 7 1 16 1M5 16c0-6 5-11 11-11M9 16c0-4 3-7 7-7" stroke="#d5dae2" strokeWidth="1.300" /><circle cx="14" cy="14" r="2" fill="#fff" /></Svg>
        <Svg w={19} h={14} c="ml-[11px]"><path d="M1 4.500h2.500L7 1v12L3.500 9.500H1zM11 3.500l7 7M18 3.500l-7 7" stroke="#fff" strokeWidth="1.300" /></Svg>
        <div className="ml-[10px] flex w-[77px] flex-col items-center text-[15px] leading-[23px]">
          <T w={52}>9:50 PM</T>
          <T w={75}>10/18/2022</T>
        </div>
        <div className="relative ml-[18px] h-[20px] w-[32px]">
          <Svg w={20} h={20} c="relative -top-[1px]"><path d="M0 0h20v16h-8l-4 4v-4H0z" fill="#fff" /><path d="M3.500 4.500h13M3.500 8h13M3.500 11.500h8" stroke="#1c2a46" strokeWidth="1.400" /></Svg>
          <div className="absolute top-[8px] left-[9px] flex h-[21px] w-[21px] items-center justify-center rounded-full border border-[#8a8f98] bg-[#2b2e35] text-[13px] leading-none font-bold">2</div>
        </div>
        <div className="mr-[5px] ml-[13px] h-[50px] w-px bg-[#77808f]" />
      </div>
    </div>
  );
}

export default function App() {
  return (
    <div className="flex h-[1080px] w-[1920px] flex-col overflow-hidden bg-[#bfdbff] font-['Liberation_Sans'] text-[15.300px] leading-[18px]">
      <div className="flex h-[28px] shrink-0 items-start border-t border-b border-t-[#eaf2fc] border-b-[#b0d2f5] bg-linear-to-b from-[#cbdcf5] to-[#e2effd]">
        <div className="flex w-[26px] overflow-hidden"><div className="-mt-[1px] -ml-[3px]"><Nextion s={25} /></div></div>
        <T w={371} c="mt-px font-['Open_Sans'] text-[15px] text-[#54709f]">Nextion Editor(C:\Nextion\on_off_button_10-18-22.HMI)</T>
        <div className="mt-[5px] mr-[15px] ml-auto flex items-center gap-[36px]">
          <Svg w={10} h={10}><path d="M0 8h10" stroke="#667180" strokeWidth="2.400" /></Svg>
          <Svg w={11} h={10}><path d="M2.500 2V.8h8v7H8.500M.7 3h7.600v6.300H.7z" stroke="#667180" strokeWidth="1.400" /></Svg>
          <Svg w={11} h={10} c="-mt-[2px]"><path d="M1 0l9 10M10 0L1 10" stroke="#667180" strokeWidth="1.900" /></Svg>
        </div>
      </div>
      <div className="flex h-[37px] shrink-0 items-center pt-[4px] pl-[10px] text-[#20457f]">
        <div className="w-[40px]"><T w={25}>File</T></div>
        <div className="w-[52px]"><T w={38}>Tools</T></div>
        <div className="w-[63px]"><T w={48}>Setting</T></div>
        <div className="w-[46px]"><T w={33}>Help</T></div>
        <T w={41}>About</T>
        <div className="mr-[7px] ml-auto flex items-center"><T w={33}>Style</T><Svg w={8} h={5} c="relative -top-[3px] ml-[3px]"><path d="M0 0h8L4 5z" fill="#111" /></Svg></div>
      </div>
      <div className="flex shrink-0 gap-[6px] pl-[3px]">
        <Strip c="w-[481px]">
          <Grip c="mr-[7px] ml-px" />
          <Item low cell="w-[77px]" off="w-[29px]" icon={OpenI} label="Open" w={37} />
          <Item low cell="w-[64px]" off="w-[25px]" icon={NewI} label="New" w={31} />
          <Item low cell="w-[72px]" off="w-[29px]" icon={SaveI} label="Save" w={34} dim />
          <Item low cell="w-[93px]" off="w-[28px]" icon={CompileI} label="Compile" w={56} />
          <Item low cell="w-[77px]" off="w-[29px]" icon={DebugI} label="Debug" w={44} />
          <div className="flex h-[34px] w-[85px] shrink-0 items-center border-2 border-[#fbc06a] bg-linear-to-b from-[#ffedb8] to-[#ffd873] pl-[8px]">
            {UploadI}<T w={48} c="relative top-[4px] ml-[7px] text-black">Upload</T>
          </div>
        </Strip>
        <Strip c="w-[384px]">
          <Grip c="mr-[8px] ml-px" />
          <Item cell="w-[72px]" off="w-[27px]" icon={CopyI} label="Copy" w={37} />
          <Item cell="w-[60px]" off="w-[28px]" icon={CutI} label="Cut" w={25} />
          <Item cell="w-[75px]" off="w-[27px]" icon={PasteI} label="Paste" w={39} />
          <Svg w={7} h={4} c="mr-[10px]"><path d="M0 0h7L3.500 4z" fill="#111" /></Svg>
          <Item cell="w-[69px]" off="w-[26px]" icon={<Lock />} label="Lock" w={34} />
          <Item cell="w-[76px]" off="w-[26px]" icon={<Lock open />} label="Unlock" w={48} />
        </Strip>
        <Strip c="w-[269px]">
          <Grip c="mr-[8px] ml-px" />
          <Item cell="w-[81px]" off="w-[26px]" icon={DelI} label="Delete" w={45} />
          <Item cell="w-[91px]" off="w-[25px]" icon={<Undo />} label="Undo(7)" w={55} />
          <Item cell="w-[80px]" off="w-[26px]" icon={<Undo flip />} label="Redo(0)" w={54} />
        </Strip>
        <Strip c="w-[332px]">
          <Grip c="mr-[7px] ml-px" />
          <Item cell="w-[104px]" off="w-[28px]" icon={GearI} label="Device ID" w={68} />
          <T w={39} c="relative top-[3px] mr-[8px]">100%</T>
          <Round />
          <div className="flex h-[20px] w-[127px] items-center">
            <div className="h-[1.500px] w-[56px] bg-[#7a9cc9]" />
            <Svg w={13} h={18}><path d="M2 1.500h9v10l-4.500 5-4.500-5z" fill="#dbe9fb" stroke="#4f6a92" strokeWidth="1.500" /><path d="M6.500 4v7" stroke="#8aa4c8" strokeWidth="1.500" /></Svg>
            <div className="h-[1.500px] flex-1 bg-[#7a9cc9]" />
          </div>
          <Round plus />
        </Strip>
      </div>
      <div className="mt-[3px] flex shrink-0 gap-[5px] pl-[3px]">
        <Strip c="w-[532px]">
          <Grip c="mr-px ml-px" />
          {alignIcons.map((ic, i) => <div key={i} className="flex w-[35.100px] shrink-0 justify-center"><Svg w={26} h={27}>{ic}</Svg></div>)}
        </Strip>
        <Strip c="w-[116px]">
          <Grip c="mr-[14px] ml-px" />
          <div className="flex h-[23px] w-[14px] flex-col items-center border-b-2 border-[#333] font-[Roboto] text-[19px] leading-[19px] font-bold text-[#333]">C</div>
          <div className="w-[16px]" />
          <Comment col="#c7cbd1" />
          <div className="w-[11px]" />
          <Comment col="#c7cbd1" x="#a9abb0" />
        </Strip>
      </div>
      <div className="flex h-[869px] shrink-0">
        <LeftColumn />
        <div className="ml-[3px] flex w-[1370px] shrink-0 flex-col">
          <div className="mt-px flex flex-col"><Workspace /></div>
          <div className="mt-[4px] flex pl-px"><OutputPanel /><EventPanel /></div>
        </div>
        <RightColumn />
      </div>
      <div className="flex h-[21px] shrink-0 items-center border-b-2 border-[#8db4e6] bg-linear-to-b from-[#e0edff] to-[#b9d6ff] pl-px text-[#20457f]">
        <T w={144} c="relative top-[2px] mr-[6px]">Encoding:iso-8859-1 |</T>
        <T w={170} c="relative top-[2px] mr-[7px]">Model:NX4832T035_011</T>
        <T w={126} c="relative top-[2px] mr-[3px]">inch:3.5(320X480)</T>
        <T w={71} c="relative top-[2px] mr-[2px]">Flash:16M</T>
        <T w={82} c="relative top-[2px] mr-[3px]">RAM:3584B</T>
        <T w={105} c="relative top-[2px] mr-[13px]">Frequency:48M|</T>
        <T w={76} c="relative top-[2px] mr-[3px]">Coordinate</T>
        <T w={45} c="relative top-[2px] mr-[7px]">X:-100</T>
        <T w={36} c="relative top-[2px]">Y:-24</T>
      </div>
      <Taskbar />
    </div>
  );
}
